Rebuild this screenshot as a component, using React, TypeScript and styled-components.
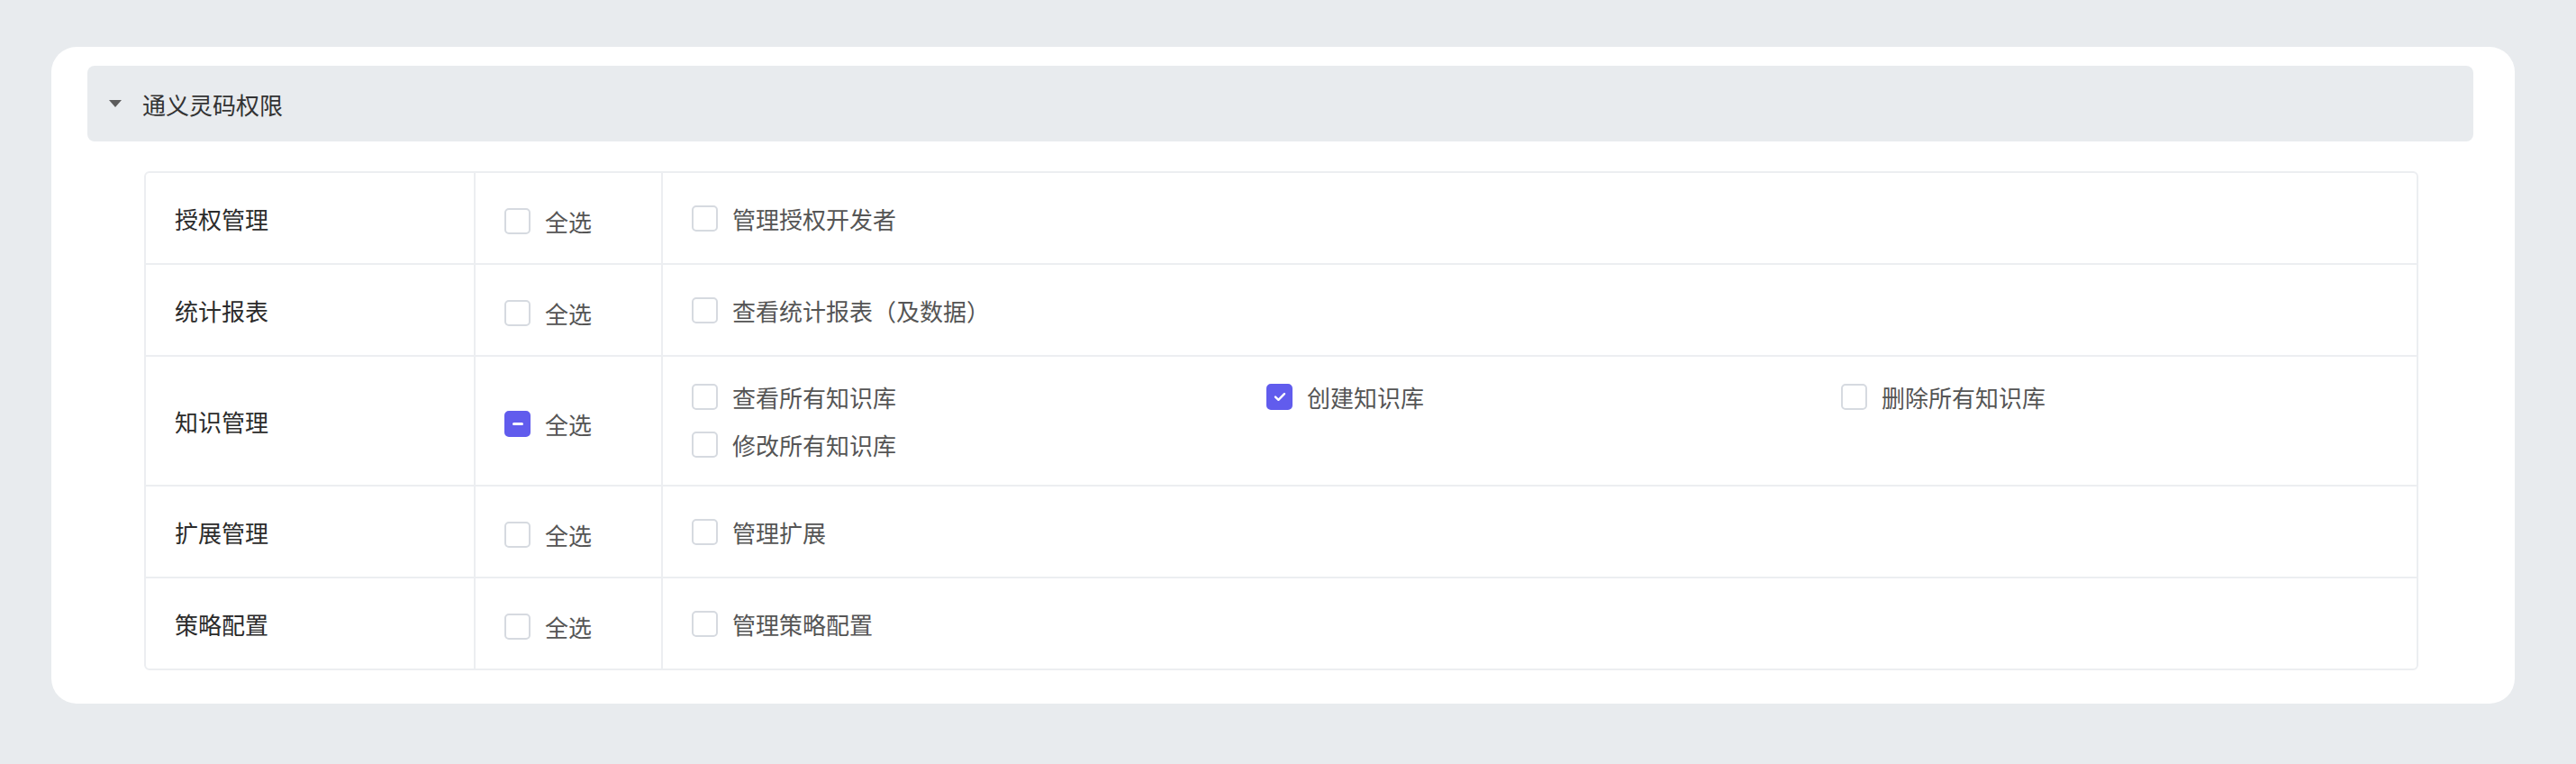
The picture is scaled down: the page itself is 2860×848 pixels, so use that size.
import styled, { createGlobalStyle } from "styled-components";

const GlobalStyle = createGlobalStyle`
  html, body {
    margin: 0;
    padding: 0;
    background: #e8ebee;
    font-family: "Noto Sans CJK SC", "Noto Sans", "Liberation Sans", sans-serif;
  }
`;

const Page = styled.div`
  padding: 52px 68px 66px 57px;
`;

const Card = styled.div`
  background: #ffffff;
  border-radius: 28px;
  padding: 21px 46px 37px 40px;
  display: flex;
  flex-direction: column;
  gap: 33px;
`;

const SectionHeader = styled.div`
  height: 84px;
  border-radius: 8px;
  background: #e8ebee;
  display: flex;
  align-items: center;
  gap: 23px;
  padding-left: 24px;
  font-size: 26px;
  color: #333333;
`;

const Caret = styled.span`
  width: 0;
  height: 0;
  border-left: 7px solid transparent;
  border-right: 7px solid transparent;
  border-top: 8px solid #5c5c5c;
`;

const Table = styled.div`
  margin: 0 61px 0 63px;
  border: 2px solid #eceef1;
  border-radius: 6px;
  display: flex;
  flex-direction: column;
`;

const Row = styled.div`
  display: grid;
  grid-template-columns: 366px 208px 1fr;
  min-height: 100px;
  &:not(:last-child) {
    border-bottom: 2px solid #eceef1;
  }
`;

const LabelCell = styled.div`
  display: flex;
  align-items: center;
  padding-left: 32px;
  border-right: 2px solid #eceef1;
  font-size: 26px;
  font-weight: 400;
  color: #2b2b2b;
`;

const SelectAllCell = styled.div`
  display: flex;
  align-items: center;
  padding: 6px 0 0 32px;
  border-right: 2px solid #eceef1;
`;

const OptionsCell = styled.div`
  display: grid;
  grid-template-columns: repeat(3, 638px);
  align-content: center;
  row-gap: 24px;
  padding: 30px 0 30px 32px;
`;

const Option = styled.label`
  display: flex;
  align-items: center;
  gap: 16px;
  font-size: 26px;
  line-height: 29px;
  color: #555555;
  white-space: nowrap;
`;

const Box = styled.span<{ $state: "off" | "on" | "mixed" }>`
  box-sizing: border-box;
  width: 29px;
  height: 29px;
  border-radius: 5px;
  flex-shrink: 0;
  display: flex;
  align-items: center;
  justify-content: center;
  border: 2px solid ${(p) => (p.$state === "off" ? "#d6dae0" : "#615ced")};
  background: ${(p) => (p.$state === "off" ? "#ffffff" : "#615ced")};
`;

const Dash = styled.span`
  width: 12px;
  height: 3px;
  border-radius: 2px;
  background: #ffffff;
`;

type State = "off" | "on" | "mixed";

function Checkbox({ state, label }: { state: State; label: string }) {
  return (
    <Option>
      <Box $state={state}>
        {state === "mixed" && <Dash />}
        {state === "on" && (
          <svg width="14" height="11" viewBox="0 0 14 11">
            <path
              d="M2 5.6 L5.4 8.8 L12 2.2"
              fill="none"
              stroke="#fff"
              strokeWidth="2.4"
              strokeLinecap="round"
              strokeLinejoin="round"
            />
          </svg>
        )}
      </Box>
      {label}
    </Option>
  );
}

const groups: { name: string; all: State; items: { label: string; on: boolean }[] }[] = [
  { name: "授权管理", all: "off", items: [{ label: "管理授权开发者", on: false }] },
  { name: "统计报表", all: "off", items: [{ label: "查看统计报表（及数据）", on: false }] },
  {
    name: "知识管理",
    all: "mixed",
    items: [
      { label: "查看所有知识库", on: false },
      { label: "创建知识库", on: true },
      { label: "删除所有知识库", on: false },
      { label: "修改所有知识库", on: false },
    ],
  },
  { name: "扩展管理", all: "off", items: [{ label: "管理扩展", on: false }] },
  { name: "策略配置", all: "off", items: [{ label: "管理策略配置", on: false }] },
];

export default function App() {
  return (
    <>
      <GlobalStyle />
      <Page>
        <Card>
          <SectionHeader>
            <Caret />
            通义灵码权限
          </SectionHeader>
          <Table>
            {groups.map((g) => (
              <Row key={g.name}>
                <LabelCell>{g.name}</LabelCell>
                <SelectAllCell>
                  <Checkbox state={g.all} label="全选" />
                </SelectAllCell>
                <OptionsCell>
                  {g.items.map((it) => (
                    <Checkbox key={it.label} state={it.on ? "on" : "off"} label={it.label} />
                  ))}
                </OptionsCell>
              </Row>
            ))}
          </Table>
        </Card>
      </Page>
    </>
  );
}
